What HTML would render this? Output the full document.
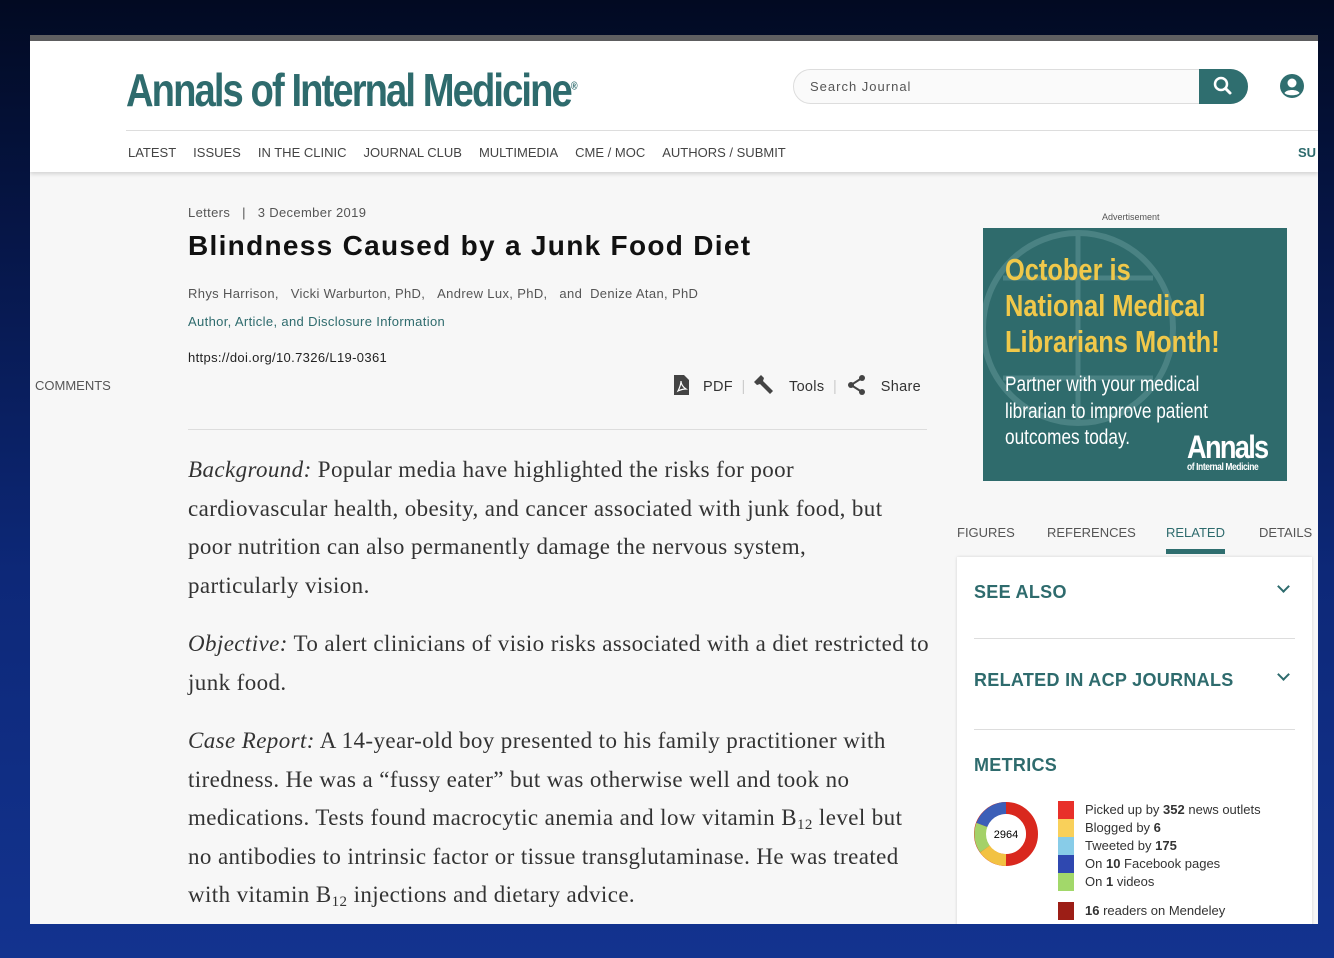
<!DOCTYPE html>
<html><head><meta charset="utf-8"><style>
*{margin:0;padding:0;box-sizing:border-box}
body{width:1334px;height:958px;overflow:hidden;background:linear-gradient(180deg,#020a22 0%,#061648 25%,#0d2878 60%,#13338f 100%);font-family:"Liberation Sans",sans-serif;position:relative}
.frame{position:absolute;left:30px;top:35px;width:1288px;height:889px;background:#f7f7f7;overflow:hidden}
.topbar{height:6px;background:#5f5f61}
.header{height:131px;background:#fff;position:relative;box-shadow:0 2px 4px rgba(0,0,0,.15)}
.logo{position:absolute;left:96px;top:22px;font-family:"Liberation Sans Narrow","Liberation Sans",sans-serif;font-weight:bold;font-size:46px;color:#2e6b6d;letter-spacing:-2.3px;transform:scaleX(.83);transform-origin:left;white-space:nowrap}
.logo sup{font-size:11px;letter-spacing:0}
.search{position:absolute;left:763px;top:28px;width:455px;height:35px;border:1px solid #ddd;border-radius:18px;background:#fafafa}
.search span{position:absolute;left:16px;top:9px;font-size:13px;color:#555;letter-spacing:1px}
.sbtn{position:absolute;right:-1px;top:-1px;width:49px;height:35px;background:#2f6e6f;border-radius:0 18px 18px 0}
.nav{position:absolute;left:96px;top:89px;right:0;border-top:1px solid #ddd;padding-top:14px;font-size:13px;color:#444}
.nav span{margin-right:15px;margin-left:2px}
.meta{position:absolute;left:158px;font-size:13px;color:#555;letter-spacing:.35px;white-space:nowrap}
.body{position:absolute;left:158px;top:416px;width:760px;font-family:"Liberation Serif",serif;font-size:23px;line-height:38.5px;color:#333;letter-spacing:.4px;white-space:nowrap}
.body p{margin-bottom:20px}
.body sub{font-size:15px;line-height:0;vertical-align:-4px}
.right{position:absolute;left:927px;top:522px;width:355px;height:380px;background:#fff;box-shadow:0 0 3px rgba(0,0,0,.15)}
.h{position:absolute;left:17px;font-size:18px;font-weight:bold;color:#2e6b6d;letter-spacing:.3px}
.chev{position:absolute;right:24px;width:9px;height:9px;border-right:2px solid #2e6b6d;border-bottom:2px solid #2e6b6d;transform:rotate(45deg)}
.sep{position:absolute;left:17px;right:17px;height:1px;background:#ddd}
.leg{position:absolute;left:101px;width:16px}
.lt{position:absolute;left:128px;font-size:13px;color:#333}
.tab{position:absolute;top:490px;font-size:13px;color:#555}
</style></head><body>
<div class="frame">
<div class="topbar"></div>
<div class="header">
<div class="logo">Annals of Internal Medicine<sup>®</sup></div>
<div class="search"><span>Search Journal</span><div class="sbtn"><svg width="49" height="35"><circle cx="22" cy="15" r="6" fill="none" stroke="#fff" stroke-width="2.5"/><line x1="26.5" y1="19.5" x2="31" y2="24" stroke="#fff" stroke-width="3" stroke-linecap="round"/></svg></div></div>
<svg style="position:absolute;left:1249px;top:32px" width="26" height="26"><circle cx="13" cy="13" r="12" fill="#2f6e6f"/><circle cx="13" cy="10" r="4.5" fill="#fff"/><path d="M5.5 20c2-4 13-4 15 0c-2 3-13 3-15 0z" fill="#fff"/></svg>
<div class="nav"><span>LATEST</span><span>ISSUES</span><span>IN THE CLINIC</span><span>JOURNAL CLUB</span><span>MULTIMEDIA</span><span>CME / MOC</span><span>AUTHORS / SUBMIT</span><b style="position:absolute;left:1172px;top:14px;color:#2e6b6d;font-weight:bold">SU</b></div>
</div>
<div class="meta" style="top:170px">Letters &nbsp;&nbsp;| &nbsp;&nbsp;3 December 2019</div>
<div style="position:absolute;left:158px;top:195px;font-size:28px;font-weight:bold;color:#111;letter-spacing:1.3px;white-space:nowrap">Blindness Caused by a Junk Food Diet</div>
<div class="meta" style="top:251px">Rhys Harrison, &nbsp;&nbsp;Vicki Warburton, PhD, &nbsp;&nbsp;Andrew Lux, PhD, &nbsp;&nbsp;and &nbsp;Denize Atan, PhD</div>
<div class="meta" style="top:279px;color:#2e6b6d">Author, Article, and Disclosure Information</div>
<div class="meta" style="top:315px;color:#222">https://doi.org/10.7326/L19-0361</div>
<div class="meta" style="top:343px;left:5px;letter-spacing:0">COMMENTS</div>
<div style="position:absolute;left:642px;top:339px;font-size:14.5px;color:#333;white-space:nowrap;letter-spacing:.3px">
<svg width="18" height="22" style="vertical-align:-5px"><path d="M2 1h10l5 5v15H2z" fill="#444"/><path d="M6 17c2-4 3-8 3-10c0 3 2 6 5 8c-3 0-6 1-8 2z" fill="none" stroke="#fff" stroke-width="1.2"/></svg>&nbsp;&nbsp; PDF <span style="color:#ccc">&nbsp;|&nbsp;</span>
<svg width="22" height="22" style="vertical-align:-5px"><path d="M3 5l4-4 3 3-1 3 10 10-3 3L6 10 3 11 0 8z" fill="#444"/></svg>&nbsp;&nbsp; Tools <span style="color:#ccc">&nbsp;|&nbsp;</span>
<svg width="22" height="22" style="vertical-align:-5px"><circle cx="16" cy="4" r="3" fill="#444"/><circle cx="5" cy="11" r="3" fill="#444"/><circle cx="16" cy="18" r="3" fill="#444"/><path d="M16 4L5 11l11 7" fill="none" stroke="#444" stroke-width="2"/></svg>&nbsp;&nbsp; Share</div>
<div style="position:absolute;left:158px;top:394px;width:739px;height:1px;background:#ddd"></div>
<div class="body">
<p><i>Background:</i> Popular media have highlighted the risks for poor<br>cardiovascular health, obesity, and cancer associated with junk food, but<br>poor nutrition can also permanently damage the nervous system,<br>particularly vision.</p>
<p><i>Objective:</i> To alert clinicians of visio risks associated with a diet restricted to<br>junk food.</p>
<p><i>Case Report:</i> A 14-year-old boy presented to his family practitioner with<br>tiredness. He was a “fussy eater” but was otherwise well and took no<br>medications. Tests found macrocytic anemia and low vitamin B<sub>12</sub> level but<br>no antibodies to intrinsic factor or tissue transglutaminase. He was treated<br>with vitamin B<sub>12</sub> injections and dietary advice.</p>
</div>
<div style="position:absolute;left:1072px;top:177px;font-size:9px;color:#555">Advertisement</div>
<div style="position:absolute;left:953px;top:193px;width:304px;height:253px;background:#2f6b6c;overflow:hidden">
<svg style="position:absolute;left:0;top:0" width="304" height="253"><circle cx="95" cy="100" r="95" fill="none" stroke="#4a8283" stroke-width="6"/><path d="M20 50h150M20 150h150M95 5v190" stroke="#4a8283" stroke-width="5"/></svg>
<div style="position:absolute;left:22px;top:24px;font-family:'Liberation Sans Narrow','Liberation Sans',sans-serif;font-weight:bold;font-size:31px;line-height:36px;color:#f0c84a;transform:scaleX(.82);transform-origin:left;white-space:nowrap">October is<br>National Medical<br>Librarians Month!</div>
<div style="position:absolute;left:22px;top:144px;font-family:'Liberation Sans Narrow','Liberation Sans',sans-serif;font-size:21px;line-height:26.5px;color:#fff;transform:scaleX(.82);transform-origin:left;white-space:nowrap">Partner with your medical<br>librarian to improve patient<br>outcomes today.</div>
<div style="position:absolute;left:204px;top:201px;font-family:'Liberation Sans Narrow','Liberation Sans',sans-serif;font-weight:bold;font-size:32px;color:#fff;letter-spacing:-2px;transform:scaleX(.85);transform-origin:left">Annals</div>
<div style="position:absolute;left:204px;top:234px;font-weight:bold;font-size:10px;color:#fff;letter-spacing:-.5px;transform:scaleX(.85);transform-origin:left;white-space:nowrap">of Internal Medicine</div>
</div>
<div class="tab" style="left:927px">FIGURES</div>
<div class="tab" style="left:1017px">REFERENCES</div>
<div class="tab" style="left:1136px;color:#2e6b6d">RELATED</div>
<div class="tab" style="left:1229px">DETAILS</div>
<div style="position:absolute;left:1136px;top:514px;width:59px;height:5px;background:#2f6e6f"></div>
<div class="right">
<div class="h" style="top:25px">SEE ALSO</div><div class="chev" style="top:25px"></div>
<div class="sep" style="top:81px"></div>
<div class="h" style="top:113px">RELATED IN ACP JOURNALS</div><div class="chev" style="top:113px"></div>
<div class="sep" style="top:172px"></div>
<div class="h" style="top:198px">METRICS</div>
<svg style="position:absolute;left:16px;top:244px" width="66" height="66"><circle cx="33" cy="33" r="26" fill="none" stroke="#d9281e" stroke-width="12"/><path d="M33 7A26 26 0 0 0 9 24" fill="none" stroke="#3c5fb8" stroke-width="12"/><path d="M9 24A26 26 0 0 0 12 48" fill="none" stroke="#a4d168" stroke-width="12"/><path d="M12 48A26 26 0 0 0 33 59" fill="none" stroke="#f2c243" stroke-width="12"/><circle cx="33" cy="33" r="20" fill="#fff"/><text x="33" y="37" font-size="11" text-anchor="middle" font-family="Liberation Sans">2964</text></svg>
<div class="leg" style="top:244px;height:18px;background:#e8302a"></div>
<div class="leg" style="top:262px;height:18px;background:#f9d05a"></div>
<div class="leg" style="top:280px;height:18px;background:#88cce8"></div>
<div class="leg" style="top:298px;height:18px;background:#2f48b0"></div>
<div class="leg" style="top:316px;height:18px;background:#a2d86a"></div>
<div class="leg" style="top:345px;height:18px;background:#9c1e16"></div>
<div class="lt" style="top:245px">Picked up by <b>352</b> news outlets</div>
<div class="lt" style="top:263px">Blogged by <b>6</b></div>
<div class="lt" style="top:281px">Tweeted by <b>175</b></div>
<div class="lt" style="top:299px">On <b>10</b> Facebook pages</div>
<div class="lt" style="top:317px">On <b>1</b> videos</div>
<div class="lt" style="top:346px"><b>16</b> readers on Mendeley</div>
</div>
</div>
</body></html>
